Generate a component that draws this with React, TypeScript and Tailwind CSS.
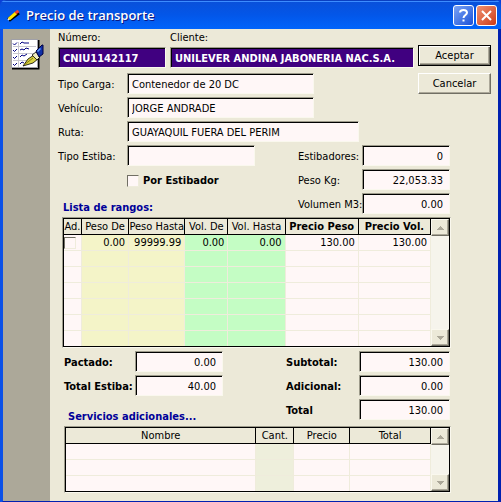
import type { ReactNode } from "react";

const sunken = "border-t border-l border-[#9d9b8b] border-r border-b border-r-[#faf8ee] border-b-[#faf8ee]";

type FieldProps = {
  id: string;
  value: string;
  width: string;
  numeric?: boolean;
  dark?: boolean;
};

function Field({ id, value, width, numeric, dark }: FieldProps) {
  return (
    <div className={`h-[21px] shrink-0 ${sunken} ${width}`}>
      <input
        id={id}
        defaultValue={value}
        className={`block h-full w-full border-t border-l border-black outline-none ${
          numeric ? "pr-[6px] text-right" : "pl-[3px]"
        } ${dark ? "bg-[#400080] font-bold text-white" : "bg-[#fff7f7] text-black"}`}
      />
    </div>
  );
}

type RowProps = FieldProps & { label: string; labelWidth: string; bold?: boolean };

function FieldRow({ label, labelWidth, bold, ...field }: RowProps) {
  return (
    <div className="flex items-center">
      <label
        htmlFor={field.id}
        className={`shrink-0 pt-[2px] whitespace-nowrap ${labelWidth} ${bold ? "font-bold" : ""}`}
      >
        {label}
      </label>
      <Field {...field} />
    </div>
  );
}

function ScrollBar() {
  const button =
    "flex h-[17px] w-full items-center justify-center border border-t-[#faf8ee] border-l-[#faf8ee] border-r-[#716f64] border-b-[#716f64] bg-[#ece9d8] shadow-[inset_-1px_-1px_0_#aca899]";
  return (
    <div className="flex w-[18px] shrink-0 flex-col justify-between bg-[#f6f4ec]">
      <button type="button" aria-label="Subir" className={button}>
        <svg width="7" height="4" viewBox="0 0 7 4" shapeRendering="crispEdges">
          <path d="M3 0h1v1h1v1h1v1h1v1H0V3h1V2h1V1h1z" fill="#aca899" />
        </svg>
      </button>
      <button type="button" aria-label="Bajar" className={button}>
        <svg width="7" height="4" viewBox="0 0 7 4" shapeRendering="crispEdges">
          <path d="M0 0h7v1H6v1H5v1H4v1H3V3H2V2H1V1H0z" fill="#aca899" />
        </svg>
      </button>
    </div>
  );
}

type Column = { title: string; width: string; fill: string; bold?: boolean };

function Grid({ columns, rows, label }: { columns: Column[]; rows: ReactNode[][]; label: string }) {
  return (
    <div className={sunken}>
      <div className="flex border border-black">
        <table aria-label={label} className="min-w-0 flex-1 table-fixed border-separate border-spacing-0">
          <thead>
            <tr>
              {columns.map((c) => (
                <th
                  key={c.title}
                  className={`h-4 overflow-hidden border-r border-b border-black p-0 pt-px text-center leading-[14px] whitespace-nowrap ${c.width} ${
                    c.bold ? "font-bold" : "font-normal"
                  }`}
                >
                  {c.title}
                </th>
              ))}
            </tr>
          </thead>
          <tbody>
            {rows.map((row, r) => (
              <tr key={r} className="group">
                {columns.map((c, i) => (
                  <td
                    key={c.title}
                    className={`h-4 border-r border-b border-[#efecdc] p-0 pt-px pr-[3px] text-right leading-[14px] group-last:h-[15px] group-last:border-b-0 ${c.fill}`}
                  >
                    {row[i]}
                  </td>
                ))}
              </tr>
            ))}
          </tbody>
        </table>
        <ScrollBar />
      </div>
    </div>
  );
}

const tick =
  "block size-3 appearance-none border border-t-[#716f64] border-l-[#716f64] border-r-[#efecdc] border-b-[#efecdc] bg-[#fff7f7]";

const rangeColumns: Column[] = [
  { title: "Ad.", width: "w-[18px]", fill: "bg-[#fff7f7]" },
  { title: "Peso De", width: "w-[47px]", fill: "bg-[#f4f4c8]" },
  { title: "Peso Hasta", width: "w-[56px]", fill: "bg-[#f4f4c8]" },
  { title: "Vol. De", width: "w-[43px]", fill: "bg-[#c4fdc4]" },
  { title: "Vol. Hasta", width: "w-[57px]", fill: "bg-[#c4fdc4]" },
  { title: "Precio Peso", width: "w-[73px]", fill: "bg-[#fff7f7]", bold: true },
  { title: "Precio Vol.", width: "w-[72px]", fill: "bg-[#fff7f7]", bold: true },
];

const rangeRows: ReactNode[][] = [
  [
    <input key="ad" type="checkbox" aria-label="Ad." className={tick} />,
    "0.00",
    "99999.99",
    "0.00",
    "0.00",
    "130.00",
    "130.00",
  ],
  [], [], [], [], [], [],
];

const serviceColumns: Column[] = [
  { title: "Nombre", width: "w-[191px]", fill: "bg-[#fff7f7]" },
  { title: "Cant.", width: "w-[38px]", fill: "bg-[#eeefdc]" },
  { title: "Precio", width: "w-[56px]", fill: "bg-[#fff7f7]" },
  { title: "Total", width: "w-[81px]", fill: "bg-[#fff7f7]" },
];

function TitleBar() {
  const button = "flex size-[21px] items-center justify-center rounded-[3px] border border-white";
  return (
    <header className="flex h-[29px] items-center bg-linear-to-b from-[#0a4fd8] via-[#0356e8] to-[#0064fb] pt-px pr-1 pl-[7px] shadow-[inset_0_1px_0_#0a3fc0,inset_0_2px_0_#3c8cff]">
      <svg width="13" height="13" viewBox="0 0 13 13" fill="none">
        <path d="M1.500 11L11.500 3.500" stroke="#000" strokeWidth="4.500" />
        <path d="M2 10L9 4" stroke="#ffe600" strokeWidth="3" />
        <path d="M8.500 4.200L11.500 1.800" stroke="#f04030" strokeWidth="3" />
        <path d="M1 10.800l1.200-1" stroke="#fff0c0" strokeWidth="2" />
      </svg>
      <h1 className="ml-[6px] flex-1 font-['Open_Sans',sans-serif] text-[13px] font-semibold text-white [text-shadow:1px_1px_0_#0a1883]">
        Precio de transporte
      </h1>
      <div className="flex gap-[2px]">
        <button type="button" aria-label="Ayuda" className={`${button} bg-linear-to-br from-[#7ba2f4] to-[#1c50d8]`}>
          <svg width="13" height="15" viewBox="0 0 13 15" fill="none" stroke="#fff" strokeWidth="2">
            <path d="M3 4.500C3 2.500 4.500 2 6.500 2S10 3 10 4.800C10 7 6.500 7 6.500 10" />
            <path d="M6.500 11.500v2" />
          </svg>
        </button>
        <button type="button" aria-label="Cerrar" className={`${button} bg-linear-to-br from-[#f09070] to-[#cc3810]`}>
          <svg width="13" height="13" viewBox="0 0 13 13" stroke="#fff" strokeWidth="2">
            <path d="M2 2l9 9M11 2l-9 9" />
          </svg>
        </button>
      </div>
    </header>
  );
}

function ChecklistIcon() {
  return (
    <svg width="33" height="31" viewBox="0 0 33 31">
      <path d="M1 29.500h26.500V1" stroke="#000" strokeWidth="2" fill="none" />
      <rect x="0.500" y="0.500" width="26" height="28" fill="#fff" stroke="#a0a0a8" />
      <path d="M7.500 3v25M2 7.500h23M2 14.500h23M2 21.500h23" stroke="#c8c8d0" />
      <g fill="none" stroke="#000080">
        <path d="M2 4.500l1.500 1.500L6 3.500M2 11l1.500 1.500L6 10M2 18l1.500 1.500L6 17M2 25l1.500 1.500L6 24" />
        <path d="M9 5l2-2 2 1h5M9 11l2-1 2 1 2-2 3 1M9 18l2-2 2 1 3-2M9 25l2-2 2 1" />
      </g>
      <path d="M12 27l5-7 6-4 4 4-5 4z" fill="#d8d040" stroke="#000" strokeWidth="0.800" />
      <path d="M13 26l9-7" stroke="#706800" strokeWidth="0.800" />
      <path d="M21 16l4-3 4 5-3 3z" fill="#f0ecc0" stroke="#000" strokeWidth="0.800" />
      <path d="M25 12l6-6h1v9l-4 3z" fill="#1030a8" stroke="#000040" />
      <path d="M26.500 12.500l3-3" stroke="#60a0ff" strokeWidth="1.500" />
    </svg>
  );
}

export default function App() {
  return (
    <div className="bg-[#0a3fd8] font-['DejaVu_Sans_Condensed','DejaVu_Sans',sans-serif] text-[11px] leading-[14px] text-black">
      <div className="flex min-h-screen flex-col overflow-hidden rounded-t-md bg-[#0a3fd8]">
        <TitleBar />
        <div className="flex flex-1 border-x-[3px] border-b-[3px] border-l-[#0a50e8] border-r-[#0020b0] border-b-[#0020b0] bg-[#ece9d8]">
          <aside className="w-[47px] shrink-0 bg-[#aca899] pt-[10px] pl-2">
            <ChecklistIcon />
          </aside>

          <main className="min-w-0 flex-1 pt-[2px] pb-2 pl-2">
            <div className="flex gap-1 pr-[7px]">
              <div className="min-w-0 flex-1">
                <div className="flex gap-1">
                  <div>
                    <label htmlFor="numero" className="block pb-[2px]">Número:</label>
                    <Field id="numero" value="CNIU1142117" width="w-[108px]" dark />
                  </div>
                  <div className="min-w-0 flex-1">
                    <label htmlFor="cliente" className="block pb-[2px]">Cliente:</label>
                    <Field id="cliente" value="UNILEVER ANDINA JABONERIA NAC.S.A." width="w-full" dark />
                  </div>
                </div>
                <div className="mt-[5px] flex flex-col gap-[3px]">
                  <FieldRow id="carga" label="Tipo Carga:" labelWidth="w-[69px]" value="Contenedor de 20 DC" width="w-[187px]" />
                  <FieldRow id="vehiculo" label="Vehículo:" labelWidth="w-[69px]" value="JORGE ANDRADE" width="w-[187px]" />
                </div>
              </div>
              <div className="flex w-[73px] shrink-0 flex-col gap-[7px] pt-[14px]">
                <button
                  type="button"
                  className="h-[21px] border border-black bg-[#ece9d8] shadow-[inset_1px_1px_0_#fff,inset_-1px_-1px_0_#716f64,inset_-2px_-2px_0_#aca899]"
                >
                  Aceptar
                </button>
                <button
                  type="button"
                  className="h-[21px] border border-t-white border-l-white border-r-[#716f64] border-b-[#716f64] bg-[#ece9d8] shadow-[inset_-1px_-1px_0_#aca899]"
                >
                  Cancelar
                </button>
              </div>
            </div>

            <div className="mt-[3px] pr-12">
              <FieldRow id="ruta" label="Ruta:" labelWidth="w-[69px]" value="GUAYAQUIL FUERA DEL PERIM" width="w-[232px]" />
              <div className="mt-[3px] flex justify-between">
                <div className="flex flex-col">
                  <FieldRow id="estiba" label="Tipo Estiba:" labelWidth="w-[69px]" value="" width="w-[128px]" />
                  <label className="mt-2 ml-[69px] flex items-center gap-1 font-bold">
                    <input type="checkbox" className={tick} />
                    Por Estibador
                  </label>
                  <h2 className="mt-auto pl-[5px] leading-[12px] font-bold text-[#000099]">Lista de rangos:</h2>
                </div>
                <div className="flex flex-col gap-[3px]">
                  <FieldRow id="estibadores" label="Estibadores:" labelWidth="w-[64px]" value="0" width="w-[88px]" numeric />
                  <FieldRow id="peso" label="Peso Kg:" labelWidth="w-[64px]" value="22,053.33" width="w-[88px]" numeric />
                  <FieldRow id="volumen" label="Volumen M3:" labelWidth="w-[64px]" value="0.00" width="w-[88px]" numeric />
                </div>
              </div>
            </div>

            <div className="mt-[3px] mr-[47px] ml-1">
              <Grid label="Lista de rangos" columns={rangeColumns} rows={rangeRows} />
            </div>

            <div className="mt-[3px] flex justify-between pr-12 pl-[6px]">
              <div className="flex flex-col gap-[3px]">
                <FieldRow id="pactado" label="Pactado:" labelWidth="w-[71px]" value="0.00" width="w-[88px]" numeric bold />
                <FieldRow id="total-estiba" label="Total Estiba:" labelWidth="w-[71px]" value="40.00" width="w-[88px]" numeric bold />
                <h2 className="mt-auto pl-1 leading-[12px] font-bold text-[#000099]">Servicios adicionales...</h2>
              </div>
              <div className="flex flex-col gap-[3px] pb-[3px]">
                <FieldRow id="subtotal" label="Subtotal:" labelWidth="w-[73px]" value="130.00" width="w-[91px]" numeric bold />
                <FieldRow id="adicional" label="Adicional:" labelWidth="w-[73px]" value="0.00" width="w-[91px]" numeric bold />
                <FieldRow id="total" label="Total" labelWidth="w-[73px]" value="130.00" width="w-[91px]" numeric bold />
              </div>
            </div>

            <div className="mt-[3px] mr-[47px] ml-[6px]">
              <Grid label="Servicios adicionales" columns={serviceColumns} rows={[[], [], []]} />
            </div>
          </main>
        </div>
      </div>
    </div>
  );
}
